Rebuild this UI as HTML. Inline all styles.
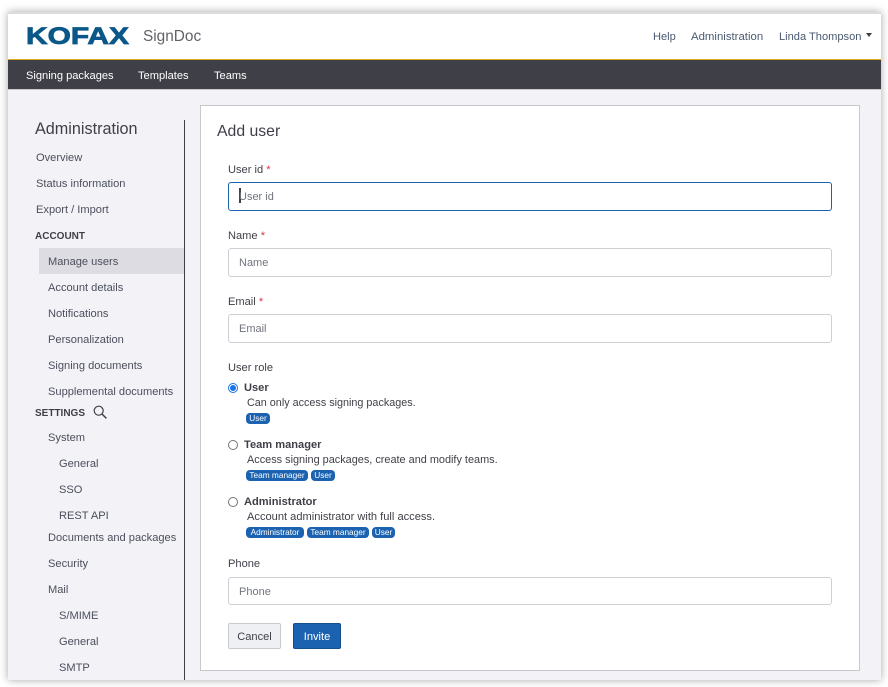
<!DOCTYPE html>
<html><head><meta charset="utf-8">
<style>
html,body{margin:0;padding:0;background:#fff}
body{width:888px;height:687px;position:relative;overflow:hidden;font-family:"Liberation Sans",sans-serif;font-size:11.1px;color:#3f3f48}
#w{position:absolute;left:8px;top:12px;width:873px;height:668px;background:#f2f2f7;box-shadow:0 0 8px rgba(0,0,0,.35);overflow:hidden}
.a{position:absolute;white-space:nowrap;line-height:24px}
.box{position:absolute;box-sizing:border-box;background:#fff;border:1px solid #cfd0d6;border-radius:3px;left:228px;width:604px}
.ph{color:#70757d;font-size:11px;left:239px}
.t{position:absolute;background:#1b62b0;color:#fff;font-size:8.3px;line-height:11px;height:11px;border-radius:4px;text-align:center;white-space:nowrap}
.r{position:absolute;left:228px;width:8px;height:8px;border:1px solid #74747a;border-radius:50%;background:#fff}
.s{color:#4c4f5c}
.b{font-weight:bold}
.h{font-weight:bold;font-size:10px}
</style></head><body>
<div id="w"></div>
<div class="a" style="left:8px;top:12px;width:873px;height:2px;background:#dcdcdc"></div>
<div class="a" style="left:8px;top:14px;width:873px;height:45px;background:#fff"></div>
<div class="a" style="left:8px;top:59px;width:873px;height:1px;background:#e0a81c"></div>
<div class="a" style="left:8px;top:60px;width:873px;height:29px;background:#3f3f48"></div>
<div class="a" style="left:8px;top:89px;width:873px;height:1px;background:#c9c9ce"></div>

<div class="a" style="left:26px;top:22px;font-size:24px;line-height:30px;font-weight:bold;color:#0b5788;-webkit-text-stroke:.8px #0b5788;transform:scaleX(1.245);transform-origin:0 0">KOFAX</div>
<div class="a" style="left:143px;top:25px;font-size:15.4px;color:#62626a">SignDoc</div>
<div class="a s" style="left:653px;top:25px;color:#4a5a70">Help</div>
<div class="a s" style="left:691px;top:25px;color:#4a5a70;font-size:11.4px">Administration</div>
<div class="a s" style="left:779px;top:25px;color:#4a5a70">Linda Thompson</div>
<div class="a" style="left:866px;top:33px;width:0;height:0;border-left:3.5px solid transparent;border-right:3.5px solid transparent;border-top:4px solid #3f3f48"></div>

<div class="a" style="left:26px;top:64px;color:#fff">Signing packages</div>
<div class="a" style="left:138px;top:64px;color:#fff">Templates</div>
<div class="a" style="left:214px;top:64px;color:#fff">Teams</div>

<div class="a" style="left:184px;top:120px;width:1px;height:560px;background:#3f3f48"></div>
<div class="a" style="left:39px;top:248px;width:145px;height:26px;background:#dcdce2"></div>
<div class="a" style="left:35px;top:117px;font-size:16.2px">Administration</div>
<div class="a s" style="left:36px;top:146px">Overview</div>
<div class="a s" style="left:36px;top:172px">Status information</div>
<div class="a s" style="left:36px;top:198px">Export / Import</div>
<div class="a h" style="left:35px;top:225px">ACCOUNT</div>
<div class="a s" style="left:48px;top:250px">Manage users</div>
<div class="a s" style="left:48px;top:276px">Account details</div>
<div class="a s" style="left:48px;top:302px">Notifications</div>
<div class="a s" style="left:48px;top:328px">Personalization</div>
<div class="a s" style="left:48px;top:354px">Signing documents</div>
<div class="a s" style="left:48px;top:380px">Supplemental documents</div>
<div class="a h" style="left:35px;top:402px">SETTINGS</div>
<svg class="a" style="left:93px;top:405px" width="14" height="14" viewBox="0 0 14 14"><circle cx="5.7" cy="5.7" r="4.5" fill="none" stroke="#3f3f48" stroke-width="1.2"/><path d="M9 9l4.4 4.4" stroke="#3f3f48" stroke-width="1.5" fill="none"/></svg>
<div class="a s" style="left:48px;top:426px">System</div>
<div class="a s" style="left:59px;top:452px">General</div>
<div class="a s" style="left:59px;top:478px">SSO</div>
<div class="a s" style="left:59px;top:504px">REST API</div>
<div class="a s" style="left:48px;top:526px">Documents and packages</div>
<div class="a s" style="left:48px;top:552px">Security</div>
<div class="a s" style="left:48px;top:578px">Mail</div>
<div class="a s" style="left:59px;top:604px">S/MIME</div>
<div class="a s" style="left:59px;top:630px">General</div>
<div class="a s" style="left:59px;top:656px">SMTP</div>

<div class="a" style="left:200px;top:105px;width:658px;height:564px;background:#fff;border:1px solid #c8c8cc"></div>
<div class="a" style="left:217px;top:120px;font-size:15.8px">Add user</div>

<div class="a" style="left:228px;top:158px">User id <span style="color:#e0334c">*</span></div>
<div class="box" style="top:182px;height:29px;border-color:#1b62b0"></div>
<div class="a" style="left:239px;top:188px;width:1.5px;height:15px;background:#3f3f48"></div>
<div class="a ph" style="top:185px">User id</div>

<div class="a" style="left:228px;top:224px">Name <span style="color:#e0334c">*</span></div>
<div class="box" style="top:248px;height:29px"></div>
<div class="a ph" style="top:251px">Name</div>

<div class="a" style="left:228px;top:290px">Email <span style="color:#e0334c">*</span></div>
<div class="box" style="top:314px;height:29px"></div>
<div class="a ph" style="top:317px">Email</div>

<div class="a" style="left:228px;top:356px">User role</div>

<div class="r" style="top:383px;border-color:#1a73e8"></div>
<div class="a" style="left:230px;top:385px;width:6px;height:6px;border-radius:50%;background:#1a73e8"></div>
<div class="a b" style="left:244px;top:376px">User</div>
<div class="a" style="left:247px;top:391px;font-size:10.8px">Can only access signing packages.</div>
<div class="t" style="left:246px;top:413px;width:24px">User</div>

<div class="r" style="top:440px"></div>
<div class="a b" style="left:244px;top:433px">Team manager</div>
<div class="a" style="left:247px;top:448px;font-size:10.9px">Access signing packages, create and modify teams.</div>
<div class="t" style="left:246px;top:470px;width:62px">Team manager</div>
<div class="t" style="left:311px;top:470px;width:24px">User</div>

<div class="r" style="top:497px"></div>
<div class="a b" style="left:244px;top:490px">Administrator</div>
<div class="a" style="left:247px;top:505px">Account administrator with full access.</div>
<div class="t" style="left:246px;top:527px;width:58px">Administrator</div>
<div class="t" style="left:307px;top:527px;width:62px">Team manager</div>
<div class="t" style="left:372px;top:527px;width:23px">User</div>

<div class="a" style="left:228px;top:552px">Phone</div>
<div class="box" style="top:577px;height:28px"></div>
<div class="a ph" style="top:580px">Phone</div>

<div class="a" style="left:228px;top:623px;width:51px;height:24px;line-height:26px;text-align:center;background:#eff0f4;border:1px solid #c9cad0;border-radius:2px">Cancel</div>
<div class="a" style="left:293px;top:623px;width:46px;height:24px;line-height:26px;text-align:center;background:#1b62b0;color:#fff;border:1px solid #154d8c;border-radius:2px">Invite</div>
</body></html>
